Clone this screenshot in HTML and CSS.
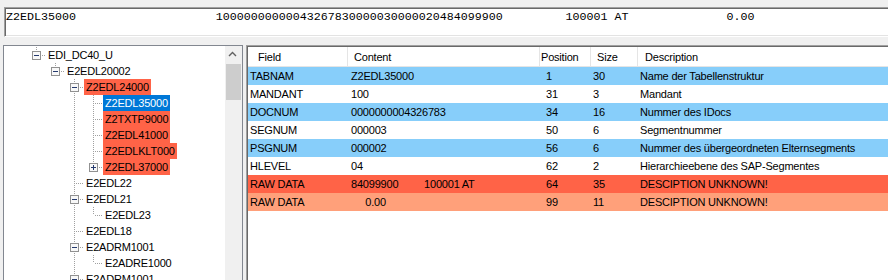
FILE: index.html
```html
<!DOCTYPE html>
<html lang="de">
<head>
    <meta charset="UTF-8">
    <meta name="viewport" content="width=device-width, initial-scale=1.0">
    <title>IDoc Segment Viewer</title>
    <link rel="stylesheet" href="styles.css">
</head>
<body>
    <div class="raw">Z2EDL35000                    10000000000043267830000030000020484099900         100001 AT              0.00</div>

    <div class="panes">
        <div class="tree">
            <div class="nodes">
                <div class="node"><span class="c l"><svg class="box" width="9" height="9" viewBox="0 0 9 9"><rect x="0.5" y="0.5" width="8" height="8" fill="#f8f8f8" stroke="#919191"/><path d="M2 4.5h5" stroke="#253a6e"/></svg></span><span class="lbl">EDI_DC40_U</span></div>
                <div class="node"><span class="c"></span><span class="c l"><svg class="box" width="9" height="9" viewBox="0 0 9 9"><rect x="0.5" y="0.5" width="8" height="8" fill="#f8f8f8" stroke="#919191"/><path d="M2 4.5h5" stroke="#253a6e"/></svg></span><span class="lbl">E2EDL20002</span></div>
                <div class="node"><span class="c"></span><span class="c"></span><span class="c t"><svg class="box" width="9" height="9" viewBox="0 0 9 9"><rect x="0.5" y="0.5" width="8" height="8" fill="#f8f8f8" stroke="#919191"/><path d="M2 4.5h5" stroke="#253a6e"/></svg></span><span class="lbl hit">Z2EDL24000</span></div>
                <div class="node"><span class="c"></span><span class="c"></span><span class="c v"></span><span class="c t"></span><span class="lbl sel">Z2EDL35000</span></div>
                <div class="node"><span class="c"></span><span class="c"></span><span class="c v"></span><span class="c t"></span><span class="lbl hit">Z2TXTP9000</span></div>
                <div class="node"><span class="c"></span><span class="c"></span><span class="c v"></span><span class="c t"></span><span class="lbl hit">Z2EDL41000</span></div>
                <div class="node"><span class="c"></span><span class="c"></span><span class="c v"></span><span class="c t"></span><span class="lbl hit">Z2EDLKLT000</span></div>
                <div class="node"><span class="c"></span><span class="c"></span><span class="c v"></span><span class="c l"><svg class="box" width="9" height="9" viewBox="0 0 9 9"><rect x="0.5" y="0.5" width="8" height="8" fill="#f8f8f8" stroke="#919191"/><path d="M2 4.5h5M4.5 2v5" stroke="#253a6e"/></svg></span><span class="lbl hit">Z2EDL37000</span></div>
                <div class="node"><span class="c"></span><span class="c"></span><span class="c t"></span><span class="lbl">E2EDL22</span></div>
                <div class="node"><span class="c"></span><span class="c"></span><span class="c t"><svg class="box" width="9" height="9" viewBox="0 0 9 9"><rect x="0.5" y="0.5" width="8" height="8" fill="#f8f8f8" stroke="#919191"/><path d="M2 4.5h5" stroke="#253a6e"/></svg></span><span class="lbl">E2EDL21</span></div>
                <div class="node"><span class="c"></span><span class="c"></span><span class="c v"></span><span class="c l"></span><span class="lbl">E2EDL23</span></div>
                <div class="node"><span class="c"></span><span class="c"></span><span class="c t"></span><span class="lbl">E2EDL18</span></div>
                <div class="node"><span class="c"></span><span class="c"></span><span class="c t"><svg class="box" width="9" height="9" viewBox="0 0 9 9"><rect x="0.5" y="0.5" width="8" height="8" fill="#f8f8f8" stroke="#919191"/><path d="M2 4.5h5" stroke="#253a6e"/></svg></span><span class="lbl">E2ADRM1001</span></div>
                <div class="node"><span class="c"></span><span class="c"></span><span class="c v"></span><span class="c l"></span><span class="lbl">E2ADRE1000</span></div>
                <div class="node"><span class="c"></span><span class="c"></span><span class="c t"><svg class="box" width="9" height="9" viewBox="0 0 9 9"><rect x="0.5" y="0.5" width="8" height="8" fill="#f8f8f8" stroke="#919191"/><path d="M2 4.5h5" stroke="#253a6e"/></svg></span><span class="lbl">E2ADRM1001</span></div>
            </div>
            <div class="vscroll">
                <div class="sb-up"><svg width="17" height="17" viewBox="0 0 17 17"><path d="M4 10l3.5-3.5L11 10" fill="none" stroke="#606060" stroke-width="1.4"/></svg></div>
                <div class="sb-thumb"></div>
            </div>
        </div>

        <div class="list">
            <div class="grid">
                <table class="fields">
                    <thead>
                        <tr><th>Field</th><th>Content</th><th>Position</th><th>Size</th><th>Description</th></tr>
                    </thead>
                    <tbody>
                        <tr class="seg"><td>TABNAM</td><td>Z2EDL35000</td><td>1</td><td>30</td><td>Name der Tabellenstruktur</td></tr>
                        <tr><td>MANDANT</td><td>100</td><td>31</td><td>3</td><td>Mandant</td></tr>
                        <tr class="seg"><td>DOCNUM</td><td>0000000004326783</td><td>34</td><td>16</td><td>Nummer des IDocs</td></tr>
                        <tr><td>SEGNUM</td><td>000003</td><td>50</td><td>6</td><td>Segmentnummer</td></tr>
                        <tr class="seg"><td>PSGNUM</td><td>000002</td><td>56</td><td>6</td><td>Nummer des übergeordneten Elternsegments</td></tr>
                        <tr><td>HLEVEL</td><td>04</td><td>62</td><td>2</td><td>Hierarchieebene des SAP-Segmentes</td></tr>
                        <tr class="unknown"><td>RAW DATA</td><td>84099900         100001 AT</td><td>64</td><td>35</td><td>DESCIPTION UNKNOWN!</td></tr>
                        <tr class="unknown-rest"><td>RAW DATA</td><td>     0.00</td><td>99</td><td>11</td><td>DESCIPTION UNKNOWN!</td></tr>
                    </tbody>
                </table>
            </div>
        </div>
    </div>
</body>
</html>
```

FILE: styles.css
```css
html, body {
    margin: 0;
    height: 100%;
    overflow: hidden;
}
body {
    background: #f0f0f0;
    font-family: "Liberation Sans", Arial, sans-serif;
    font-size: 11px;
    letter-spacing: -0.2px;
    color: #000;
}

/* raw segment line on top */
.raw {
    width: 900px;
    height: 25px;
    margin: 7px 0 0 4px;
    padding: 3px 0 0 1px;
    background: #fff;
    border-top: 1px solid #a0a0a0;
    border-left: 1px solid #a0a0a0;
    border-bottom: 1px solid #fff;
    box-shadow: inset 1px 1px 0 #696969, inset 0 -1px 0 #e3e3e3;
    font-family: "Liberation Mono", "Courier New", monospace;
    font-size: 11.67px;
    letter-spacing: 0;
    line-height: 13px;
    white-space: pre;
}

.panes {
    display: flex;
    gap: 3px;
    height: 240px;
    margin: 8px 0 0 3px;
}

/* segment tree */
.tree {
    display: flex;
    flex: none;
    width: 238px;
    background: #fff;
    border: 1px solid #828790;
}
.nodes {
    flex: 1;
    padding: 1px 0 0 23px;
    overflow: hidden;
}
.node {
    display: flex;
    height: 16px;
    white-space: nowrap;
}
.c {
    flex: none;
    width: 19px;
    height: 16px;
}
.v {
    background: repeating-linear-gradient(#a0a0a0 0 1px, transparent 1px 2px) 9px 0 / 1px 16px no-repeat;
}
.t {
    background:
        repeating-linear-gradient(#a0a0a0 0 1px, transparent 1px 2px) 9px 0 / 1px 16px no-repeat,
        repeating-linear-gradient(90deg, #a0a0a0 0 1px, transparent 1px 2px) 11px 8px / 8px 1px no-repeat;
}
.l {
    background:
        repeating-linear-gradient(#a0a0a0 0 1px, transparent 1px 2px) 9px 0 / 1px 8px no-repeat,
        repeating-linear-gradient(90deg, #a0a0a0 0 1px, transparent 1px 2px) 11px 8px / 8px 1px no-repeat;
}
.box {
    display: block;
    margin: 4px 0 0 5px;
}
.lbl {
    height: 16px;
    padding: 0 2px;
    line-height: 16px;
}
.lbl.hit {
    background: #ff6347;
}
.lbl.sel {
    background: #0078d7;
    color: #fff;
}

.vscroll {
    flex: none;
    width: 17px;
    background: #f0f0f0;
}
.sb-up {
    height: 17px;
}
.sb-up svg {
    display: block;
}
.sb-thumb {
    height: 36px;
    margin: 1px 1px 0;
    background: #cdcdcd;
}

/* field list */
.list {
    flex: none;
    width: 700px;
    border-top: 1px solid #a0a0a0;
    border-left: 1px solid #a0a0a0;
}
.grid {
    box-sizing: border-box;
    height: 100%;
    background: #fff;
    border-top: 1px solid #696969;
    border-left: 1px solid #696969;
}
.fields {
    border-collapse: separate;
    border-spacing: 0;
    table-layout: fixed;
    width: 689px;
}
.fields th {
    box-sizing: border-box;
    height: 20px;
    padding: 2px 0 0;
    border-bottom: 1px solid #e5e5e5;
    font-weight: normal;
    text-align: left;
    line-height: 17px;
    white-space: nowrap;
    overflow: hidden;
}
.fields th + th {
    border-left: 1px solid #e5e5e5;
}
.fields th:nth-child(1) { width: 99px;  padding-left: 10px; }
.fields th:nth-child(2) { width: 192px; padding-left: 6px; }
.fields th:nth-child(3) { width: 51px;  padding-left: 1px; }
.fields th:nth-child(4) { width: 47px;  padding-left: 6px; }
.fields th:nth-child(5) { width: 300px; padding-left: 7px; }

.fields td {
    height: 18px;
    padding: 0;
    line-height: 18px;
    white-space: pre;
    overflow: hidden;
}
.fields td:nth-child(1) { padding-left: 2px; }
.fields td:nth-child(2) { padding-left: 4px; }
.fields td:nth-child(3) { padding-left: 7px; }
.fields td:nth-child(4) { padding-left: 3px; }
.fields td:nth-child(5) { padding-left: 3px; }

.seg td {
    background: #87cefa;
}
.unknown td {
    background: #ff6347;
}
.unknown-rest td {
    background: #ffa07a;
}
```
